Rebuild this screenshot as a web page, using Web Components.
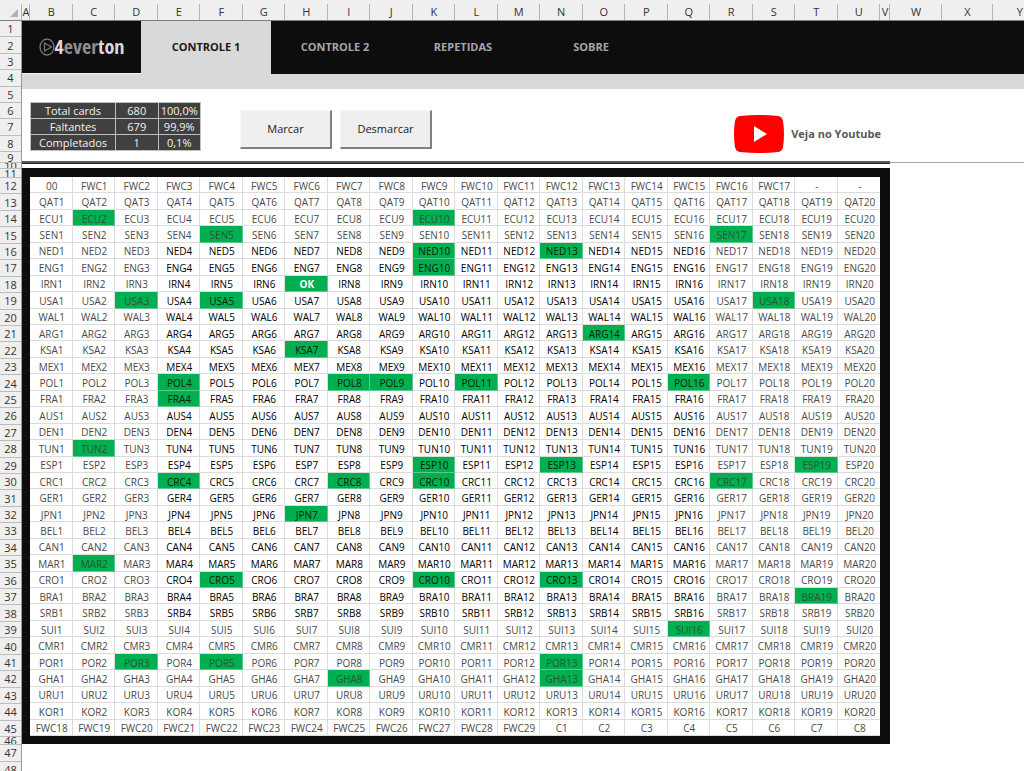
<!DOCTYPE html>
<html lang="pt-BR">
<head>
<meta charset="utf-8">
<title>4everton – Controle 1</title>
<style>
html, body { margin: 0; height: 100%; overflow: hidden; background: #fff; }
body { font-family: "Open Sans", "Noto Sans", sans-serif; font-size: 10px; color: #4a4a4a; }
</style>
</head>
<body>
<sheet-app></sheet-app>
<script>
const define = (name, html, setup) => {
  const template = document.createElement('template');
  template.innerHTML = '<style>*{box-sizing:border-box}</style>' + html;
  customElements.define(name, class extends HTMLElement {
    connectedCallback() {
      if (this.shadowRoot) return;
      this.attachShadow({ mode: 'open' }).append(template.content.cloneNode(true));
      if (setup) setup(this.shadowRoot, this);
    }
  });
};

define('column-letters', `
<style>
:host { display: grid; grid-template-columns: 22px 16fr repeat(20, 85fr) 20fr 104fr 102fr 62fr; height: 21px; padding-top: 4px; background: #efefef; border-bottom: 1px solid #7f7f7f; color: #333; }
span { display: flex; align-items: center; justify-content: center; min-width: 0; overflow: hidden; border-right: 1px solid #b4b4b4; padding-left: 1px; font-size: 11px; line-height: 14px; }
span:last-child { justify-content: flex-end; padding-right: 1px; border-right: 0; }
.corner { justify-content: flex-end; padding: 2px 3px 0 0; }
</style>
<span class="corner"><svg width="8" height="8" viewBox="0 0 8 8" aria-hidden="true"><path d="M8 0V8H0Z" fill="#b2b2b2"/></svg></span>`,
root => {
  for (const letter of 'ABCDEFGHIJKLMNOPQRSTUVWXY') {
    const s = document.createElement('span');
    s.textContent = letter;
    root.append(s);
  }
});

define('row-numbers', `
<style>
:host { display: block; background: #efefef; border-right: 1px solid #9a9a9a; color: #333; }
.block { display: grid; grid-auto-rows: minmax(0, 1fr); }
span { display: flex; align-items: center; justify-content: center; min-height: 0; overflow: hidden; border-bottom: 1px solid #bdbdbd; padding-top: 1px; font-size: 11px; line-height: 14px; }
</style>`,
root => {
  const blocks = [[1, 8, 131], [9, 9, 11], [10, 10, 6], [11, 11, 9], [12, 45, 559], [46, 46, 8], [47, 48, 33]];
  for (const [first, last, height] of blocks) {
    const b = document.createElement('div');
    b.className = 'block';
    b.style.height = height + 'px';
    for (let i = first; i <= last; i++) {
      const s = document.createElement('span');
      s.textContent = i;
      b.append(s);
    }
    root.append(b);
  }
});

define('brand-logo', `
<style>
:host { display: flex; align-items: center; justify-content: center; width: 119px; background: #0d0d0d; border-bottom: 1px solid #f2f2f2; color: #d9d9d9; }
svg { flex: none; }
b { font: bold 20px/28px "Liberation Sans Narrow", "Open Sans Condensed", "Open Sans", sans-serif; font-stretch: condensed; }
.mid { color: #8e8e8e; }
</style>
<svg width="16" height="18" viewBox="0 0 16 18" fill="none" stroke="#777" aria-hidden="true"><ellipse cx="8" cy="9" rx="7" ry="8" stroke-width="1.300"/><path d="M5.500 5L12.500 9L5.500 13Z" stroke-width="1.300"/></svg>
<b>4<span class="mid">ever</span>ton</b>`);

define('nav-tab', `
<style>
:host { display: flex; width: 128px; color: #a6a6a6; }
:host([active]) { width: 130px; background: #d9d9d9; color: #1a1a1a; }
a { flex: 1; display: flex; align-items: center; justify-content: center; color: inherit; text-decoration: none; font-weight: 700; font-size: 11px; line-height: 16px; padding-bottom: 2px; }
</style>
<a href="#"><slot></slot></a>`);

define('top-nav', `
<style>
:host { display: flex; height: 68px; background: #0d0d0d; border-bottom: 15px solid #d9d9d9; }
</style>
<brand-logo></brand-logo>
<nav-tab active>CONTROLE 1</nav-tab><nav-tab>CONTROLE 2</nav-tab><nav-tab>REPETIDAS</nav-tab><nav-tab>SOBRE</nav-tab>`);

define('totals-table', `
<style>
:host { display: block; width: 171px; }
table { width: 100%; table-layout: fixed; border-collapse: collapse; color: #f2f2f2; background: #404040; }
td, th { height: 16px; padding: 0; border: 1px solid #bfbfbf; font-weight: 400; font-size: 11px; line-height: 15px; text-align: center; white-space: nowrap; }
th { width: 50%; }
</style>
<table>
<tr><th scope="row">Total cards</th><td>680</td><td>100,0%</td></tr>
<tr><th scope="row">Faltantes</th><td>679</td><td>99,9%</td></tr>
<tr><th scope="row">Completados</th><td>1</td><td>0,1%</td></tr>
</table>`);

define('sheet-button', `
<style>
:host { display: block; width: 92px; }
button { display: block; width: 100%; height: 39px; padding: 0; background: #efefef; border: solid; border-width: 1px 2px 2px 1px; border-color: #f7f7f7 #808080 #808080 #f7f7f7; font: inherit; font-size: 11px; line-height: 16px; color: #1a1a1a; }
</style>
<button type="button"><slot></slot></button>`);

define('youtube-link', `
<style>
:host { display: block; }
a { display: flex; align-items: center; gap: 7px; color: #595959; text-decoration: none; font-weight: 700; font-size: 11px; line-height: 16px; white-space: nowrap; }
</style>
<a href="#"><svg width="50" height="38" viewBox="0 0 50 38" aria-hidden="true"><path d="M6 1Q25-1 44 1Q48 1.500 49 6Q51 19 49 32Q48 36.500 44 37Q25 39 6 37Q2 36.500 1 32Q-1 19 1 6Q2 1.500 6 1Z" fill="#f00"/><path d="M20 11L33 19L20 27Z" fill="#fff"/></svg><slot></slot></a>`);

define('sheet-toolbar', `
<style>
:host { display: grid; grid-template-columns: 1736fr 268fr; height: 72px; }
.tools { display: flex; align-items: flex-start; padding: 13px 9px 0 8px; }
.buttons { display: flex; gap: 8px; padding: 8px 0 0 39px; }
youtube-link { margin: 13px 0 0 auto; }
</style>
<div class="tools"><totals-table></totals-table>
<div class="buttons"><sheet-button>Marcar</sheet-button><sheet-button>Desmarcar</sheet-button></div>
<youtube-link>Veja no Youtube</youtube-link></div>`);

define('freeze-line', `
<style>
:host { display: grid; grid-template-columns: 1736fr 268fr; height: 7px; }
.thick { height: 3px; background: #595959; border-bottom: 1px solid #262626; }
.thin { height: 2px; border-bottom: 1px solid #a6a6a6; }
</style>
<div class="thick"></div><div class="thin"></div>`);

define('sticker-board', `
<style>
:host { display: grid; grid-template-columns: 1736fr 268fr; }
.frame { display: grid; grid-template-columns: 16fr 1700fr 20fr; padding: 9px 0 8px; background: #0d0d0d; }
table { grid-column: 2; display: block; background: #fff; }
tbody { display: grid; grid-auto-rows: minmax(0, 1fr); height: 559px; }
tr { display: grid; grid-template-columns: repeat(20, minmax(0, 1fr)); }
td { display: flex; align-items: center; justify-content: center; min-height: 0; padding: 2px 0 0 2px; border: solid #dcdcdc; border-width: 0 1px 1px 0; line-height: 14px; white-space: nowrap; }
td:last-child { border-right: 0; }
.strong { color: #000; }
.done { background: #00b050; border-color: #5cc98c; color: #27543a; }
.strong.done { color: #04200f; }
.ok { color: #fff; font-weight: 700; }
</style>
<div class="frame"><table><tbody></tbody></table></div>`,
root => {
  const teams = 'QAT ECU SEN NED ENG IRN USA WAL ARG KSA MEX POL FRA AUS DEN TUN ESP CRC GER JPN BEL CAN MAR CRO BRA SRB SUI CMR POR GHA URU KOR'.split(' ');
  const done = new Set('ECU2 ECU10 SEN5 SEN17 NED10 NED13 ENG10 IRN7 USA3 USA5 USA18 ARG14 KSA7 POL4 POL8 POL9 POL11 POL16 FRA4 TUN2 ESP10 ESP13 ESP19 CRC4 CRC8 CRC10 CRC17 JPN7 MAR2 CRO5 CRO10 CRO13 BRA19 SUI16 POR3 POR5 POR13 GHA8 GHA13'.split(' '));
  const range = (n, f) => Array.from({ length: n }, (_, i) => f(i + 1));
  const rows = [
    ['00', ...range(17, i => 'FWC' + i), '-', '-'],
    ...teams.map(t => range(20, i => t + i)),
    [...range(12, i => 'FWC' + (i + 17)), ...range(8, i => 'C' + i)]
  ];
  const body = root.querySelector('tbody');
  rows.forEach((row, r) => {
    const tr = document.createElement('tr');
    row.forEach((code, c) => {
      const td = document.createElement('td');
      td.textContent = code === 'IRN7' ? 'OK' : code;
      if (r >= 4 && r <= 26 && c >= 3 && c <= 15) td.classList.add('strong');
      if (done.has(code)) td.classList.add('done');
      if (code === 'IRN7') td.className = 'done ok';
      tr.append(td);
    });
    body.append(tr);
  });
});

define('sheet-app', `
<style>
:host { display: block; height: 100vh; overflow: hidden; }
.body { display: grid; grid-template-columns: 22px minmax(0, 1fr); }
</style>
<column-letters></column-letters>
<div class="body"><row-numbers></row-numbers>
<main><top-nav></top-nav><sheet-toolbar></sheet-toolbar><freeze-line></freeze-line><sticker-board></sticker-board></main></div>`);
</script>
</body>
</html>
